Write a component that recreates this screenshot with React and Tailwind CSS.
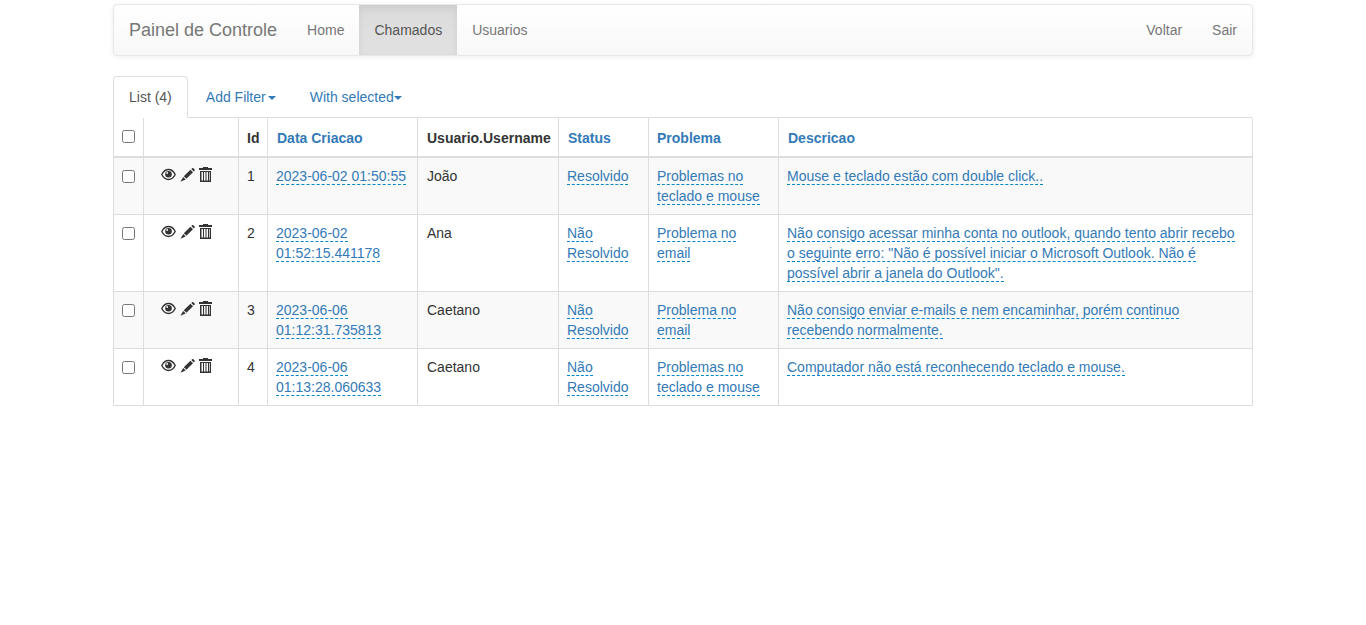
const TH = 'h-[39px] border border-t-0 border-[#ddd] border-b-2 p-2 text-left align-bottom font-bold leading-5';
const TD = 'border border-[#ddd] p-2 align-top leading-5';
const LINK = 'text-[#337ab7] no-underline';
const EDITABLE = 'text-[#337ab7] border-b border-dashed border-[#0088cc]';

const rows = [
  {
    id: 1,
    date: '2023-06-02 01:50:55',
    user: 'João',
    status: 'Resolvido',
    problem: 'Problemas no teclado e mouse',
    text: 'Mouse e teclado estão com double click..',
  },
  {
    id: 2,
    date: '2023-06-02 01:52:15.441178',
    user: 'Ana',
    status: 'Não Resolvido',
    problem: 'Problema no email',
    text: 'Não consigo acessar minha conta no outlook, quando tento abrir recebo o seguinte erro: "Não é possível iniciar o Microsoft Outlook. Não é possível abrir a janela do Outlook".',
  },
  {
    id: 3,
    date: '2023-06-06 01:12:31.735813',
    user: 'Caetano',
    status: 'Não Resolvido',
    problem: 'Problema no email',
    text: 'Não consigo enviar e-mails e nem encaminhar, porém continuo recebendo normalmente.',
  },
  {
    id: 4,
    date: '2023-06-06 01:13:28.060633',
    user: 'Caetano',
    status: 'Não Resolvido',
    problem: 'Problemas no teclado e mouse',
    text: 'Computador não está reconhecendo teclado e mouse.',
  },
];

const EyeIcon = () => (
  <svg className="mt-px shrink-0" height="13" viewBox="0 0 15 13" width="15">
    <path d="M.8 6.500C2.400 3.300 4.700 1.500 7.500 1.500s5.100 1.800 6.700 5c-1.600 3.200-3.900 5-6.700 5S2.400 9.700.8 6.500z" fill="#fff" stroke="#333" strokeWidth="1.400" />
    <circle cx="7.500" cy="6.200" r="3.300" fill="#333" />
    <circle cx="6.200" cy="5" r="0.900" fill="#fff" />
  </svg>
);

const PencilIcon = () => (
  <svg className="mt-px shrink-0" height="14" viewBox="0 0 15 14" width="15">
    <path d="M3.800 8.200 10.400 1.700 13 4.200 6.400 10.800z" fill="#333" />
    <path d="M11.300.9 12.200.2C12.600 0 13 0 13.400.3L14.600 1.500C14.900 1.900 14.900 2.300 14.600 2.700L13.800 3.500z" fill="#333" />
    <path d="M3.200 9 5.700 11.500 .4 13.800z" fill="#333" />
  </svg>
);

const TrashIcon = () => (
  <svg className="shrink-0" height="15" viewBox="0 0 13 15" width="13">
    <path d="M4 0h5v1h4v2H0V1h4z" fill="#333" />
    <path d="M1 4h11v11H1zM2.500 5v8.500h1.500V5zm2.500 0v8.500h1.500V5zm2.500 0v8.500H9V5zM10 5v8.500h.7V5z" fill="#333" fillRule="evenodd" />
  </svg>
);

const Caret = ({ gap }) => (
  <span className={`inline-block h-0 w-0 border-x-4 border-t-4 border-x-transparent border-t-[#337ab7] align-middle ${gap ? 'ml-0.5' : ''}`} />
);

function App() {
  return (
    <div className="min-h-[625px] bg-white pt-1 text-sm leading-5 text-[#333] font-['Liberation_Sans',Arial,sans-serif]">
      <div className="mx-auto w-[1140px]">
        <nav className="mb-5 flex h-[52px] justify-between rounded border border-[#e7e7e7] bg-gradient-to-b from-white to-[#f8f8f8] shadow-[0_1px_5px_rgba(0,0,0,0.075)]">
          <div className="flex">
            <a className="px-[15px] py-[15px] text-lg leading-5 text-[#777]">Painel de Controle</a>
            <a className="p-[15px] text-[#777]">Home</a>
            <a className="bg-gradient-to-b from-[#dbdbdb] to-[#e2e2e2] p-[15px] text-[#555] shadow-[inset_0_3px_9px_rgba(0,0,0,0.075)]">Chamados</a>
            <a className="p-[15px] text-[#777]">Usuarios</a>
          </div>
          <div className="flex">
            <a className="p-[15px] text-[#777]">Voltar</a>
            <a className="p-[15px] text-[#777]">Sair</a>
          </div>
        </nav>

        <ul className="flex h-[42px] w-[1139px] border-b border-[#ddd]">
          <li className="mr-0.5 h-[42px] rounded-t border border-[#ddd] border-b-white bg-white px-[15px] py-2.5 text-[#555]">List (4)</li>
          <li className={`mr-0.5 border border-transparent px-[15px] py-2.5 ${LINK}`}>Add Filter<Caret gap /></li>
          <li className={`border border-transparent px-[15px] py-2.5 ${LINK}`}>With selected<Caret /></li>
        </ul>

        <table className="w-[1139px] table-fixed border-collapse">
          <colgroup>
            <col className="w-[30px]" />
            <col className="w-[95px]" />
            <col className="w-[29px]" />
            <col className="w-[150px]" />
            <col className="w-[141px]" />
            <col className="w-[90px]" />
            <col className="w-[130px]" />
            <col className="w-[474px]" />
          </colgroup>
          <thead>
            <tr>
              <th className={TH}><input className="mb-[5px] block" type="checkbox" /></th>
              <th className={TH}></th>
              <th className={TH}>Id</th>
              <th className={`${TH} pl-[9px] ${LINK}`}>Data Criacao</th>
              <th className={`${TH} pl-[9px]`}>Usuario.Username</th>
              <th className={`${TH} pl-[9px] ${LINK}`}>Status</th>
              <th className={`${TH} ${LINK}`}>Problema</th>
              <th className={`${TH} pl-[9px] ${LINK}`}>Descricao</th>
            </tr>
          </thead>
          <tbody>
            {rows.map((row, i) => (
              <tr key={row.id} className={i % 2 === 0 ? 'bg-[#f9f9f9]' : 'bg-white'}>
                <td className={TD}><input className="mt-1 block" type="checkbox" /></td>
                <td className={TD}>
                  <div className="flex gap-1 pl-[9px] pt-px">
                    <EyeIcon />
                    <PencilIcon />
                    <TrashIcon />
                  </div>
                </td>
                <td className={TD}>{row.id}</td>
                <td className={TD}><a className={EDITABLE}>{row.date}</a></td>
                <td className={`${TD} pl-[9px]`}>{row.user}</td>
                <td className={TD}><a className={EDITABLE}>{row.status}</a></td>
                <td className={TD}><a className={EDITABLE}>{row.problem}</a></td>
                <td className={TD}><a className={EDITABLE}>{row.text}</a></td>
              </tr>
            ))}
          </tbody>
        </table>
      </div>
    </div>
  );
}

export default App;
